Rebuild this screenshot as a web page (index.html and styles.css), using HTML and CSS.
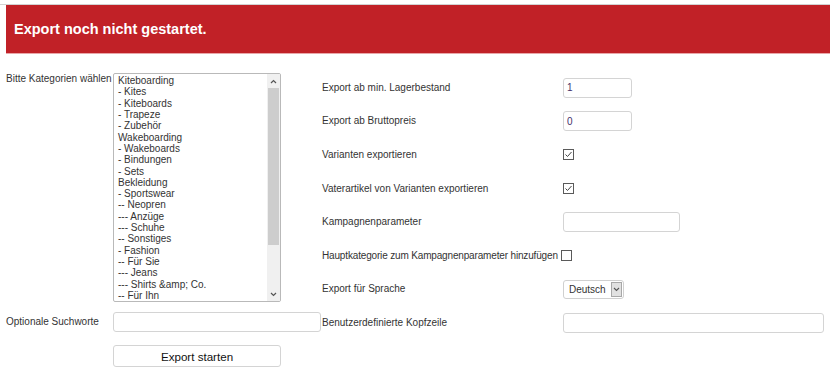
FILE: index.html
```html
<!DOCTYPE html>
<html lang="de">
<head>
<meta charset="utf-8">
<title>Export</title>
<link rel="stylesheet" href="styles.css">
</head>
<body>
<div class="topline"></div>
<div class="banner"><h1>Export noch nicht gestartet.</h1></div>
<div class="main">
  <div class="left">
    <label class="lbl lbl-top">Bitte Kategorien wählen</label>
    <div class="listbox">
      <ul class="opts">
        <li>Kiteboarding</li>
        <li>- Kites</li>
        <li>- Kiteboards</li>
        <li>- Trapeze</li>
        <li>- Zubehör</li>
        <li>Wakeboarding</li>
        <li>- Wakeboards</li>
        <li>- Bindungen</li>
        <li>- Sets</li>
        <li>Bekleidung</li>
        <li>- Sportswear</li>
        <li>-- Neopren</li>
        <li>--- Anzüge</li>
        <li>--- Schuhe</li>
        <li>-- Sonstiges</li>
        <li>- Fashion</li>
        <li>-- Für Sie</li>
        <li>--- Jeans</li>
        <li>--- Shirts &amp;amp; Co.</li>
        <li>-- Für Ihn</li>
      </ul>
      <div class="sb">
        <span class="arr"><svg width="7" height="5" viewBox="0 0 7 5"><path d="M1 4 L3.5 1.5 L6 4" stroke="#555" stroke-width="1.2" fill="none"/></svg></span>
        <div class="thumb"></div>
        <div class="track"></div>
        <span class="arr"><svg width="7" height="5" viewBox="0 0 7 5"><path d="M1 1 L3.5 3.5 L6 1" stroke="#555" stroke-width="1.2" fill="none"/></svg></span>
      </div>
    </div>
    <label class="lbl row2">Optionale Suchworte</label>
    <input class="txt search row2" type="text">
    <span></span>
    <button class="btn" type="button">Export starten</button>
  </div>
  <div class="right">
    <label class="lbl">Export ab min. Lagerbestand</label>
    <input class="txt small" type="text" value="1">
    <label class="lbl">Export ab Bruttopreis</label>
    <input class="txt small" type="text" value="0">
    <label class="lbl">Varianten exportieren</label>
    <span class="cb"><svg width="11" height="11" viewBox="0 0 11 11"><rect x="0.5" y="0.5" width="10" height="10" fill="#fff" stroke="#5a5a5a"/><path d="M2.5 5.5 L4.5 7.5 L8.5 3" stroke="#444" stroke-width="1" fill="none"/></svg></span>
    <label class="lbl">Vaterartikel von Varianten exportieren</label>
    <span class="cb"><svg width="11" height="11" viewBox="0 0 11 11"><rect x="0.5" y="0.5" width="10" height="10" fill="#fff" stroke="#5a5a5a"/><path d="M2.5 5.5 L4.5 7.5 L8.5 3" stroke="#444" stroke-width="1" fill="none"/></svg></span>
    <label class="lbl">Kampagnenparameter</label>
    <input class="txt medium" type="text">
    <label class="lbl lbl-long">Hauptkategorie zum Kampagnenparameter hinzufügen</label>
    <span class="cb cb-tight"><svg width="11" height="11" viewBox="0 0 11 11"><rect x="0.5" y="0.5" width="10" height="10" fill="#fff" stroke="#5a5a5a"/></svg></span>
    <label class="lbl">Export für Sprache</label>
    <div class="sel"><span class="sel-text">Deutsch</span><span class="dd"><svg width="7" height="5" viewBox="0 0 7 5"><path d="M1 1 L3.5 3.5 L6 1" stroke="#555" stroke-width="1.1" fill="none"/></svg></span></div>
    <label class="lbl">Benutzerdefinierte Kopfzeile</label>
    <input class="txt wide" type="text">
  </div>
</div>
</body>
</html>
```

FILE: styles.css
```css
body {
  margin: 0;
  background: #fff;
  font-family: "Liberation Sans", Arial, sans-serif;
  font-size: 10px;
  color: #333;
}

.topline {
  height: 1px;
  margin-top: 4px;
  background: #d2d2d2;
}

.banner {
  margin-left: 6px;
  height: 48px;
  background: #c12127;
  border-bottom: 1px solid #e9a7a9;
  display: flex;
  align-items: center;
  padding-left: 8px;
}

.banner h1 {
  margin: 0;
  font-family: "Liberation Sans", Arial, sans-serif;
  font-size: 14.5px;
  font-weight: bold;
  color: #fff;
}

.main {
  display: flex;
  align-items: flex-start;
  padding-left: 6px;
  margin-top: 19px;
}

.left {
  width: 316px;
  display: grid;
  grid-template-columns: 107px auto;
  align-items: center;
  align-content: start;
}

.lbl {
  line-height: 12px;
  white-space: nowrap;
}

.lbl-top {
  align-self: start;
}

.lbl-long {
  letter-spacing: -0.16px;
}

.listbox {
  width: 168px;
  height: 229px;
  box-sizing: border-box;
  border: 1px solid #b9b9b9;
  border-radius: 2px;
  display: flex;
  overflow: hidden;
  background: #fff;
}

.opts {
  flex: 1;
  margin: 0;
  padding: 1px 0 0 4px;
  list-style: none;
  line-height: 11.32px;
  font-size: 10px;
  color: #333;
  overflow: hidden;
  white-space: nowrap;
}

.sb {
  width: 13px;
  background: #f0f0f0;
  display: flex;
  flex-direction: column;
}

.arr {
  height: 14px;
  display: flex;
  align-items: center;
  justify-content: center;
}

.thumb {
  height: 157px;
  margin: 0 1px;
  background: #cdcdcd;
}

.track {
  flex: 1;
}

.row2 {
  margin-top: 10px;
}

.txt {
  height: 20px;
  box-sizing: border-box;
  border: 1px solid #d4d4d4;
  border-radius: 3px;
  padding: 0 3px;
  font-family: "Liberation Sans", Arial, sans-serif;
  font-size: 10px;
  color: #45306a;
  background: #fff;
  outline: none;
}

.search {
  width: 208px;
}

.btn {
  margin-top: 13px;
  width: 168px;
  height: 22px;
  box-sizing: border-box;
  border: 1px solid #d4d4d4;
  border-radius: 3px;
  background: #fff;
  font-family: "Liberation Sans", Arial, sans-serif;
  font-size: 11.6px;
  color: #111;
  padding: 0;
}

.right {
  margin-top: -2px;
  display: grid;
  grid-template-columns: 241px auto;
  grid-auto-rows: 33.6px;
  align-items: center;
  justify-items: start;
}

.small {
  width: 69px;
}

.medium {
  width: 117px;
}

.wide {
  width: 261px;
}

.cb {
  width: 11px;
  height: 11px;
  display: block;
}

.cb svg {
  display: block;
}

.cb-tight {
  margin-left: -2px;
}

.sel {
  width: 61px;
  height: 19px;
  box-sizing: border-box;
  border: 1px solid #d0d0d0;
  border-radius: 3px;
  display: flex;
  align-items: stretch;
  background: #fff;
}

.sel-text {
  flex: 1;
  padding-left: 5px;
  display: flex;
  align-items: center;
  color: #333;
}

.dd {
  width: 11px;
  margin: 1px 1px 1px 0;
  box-sizing: border-box;
  border: 1px solid #a8a8a8;
  background: #e1e1e1;
  display: flex;
  align-items: center;
  justify-content: center;
}
```
